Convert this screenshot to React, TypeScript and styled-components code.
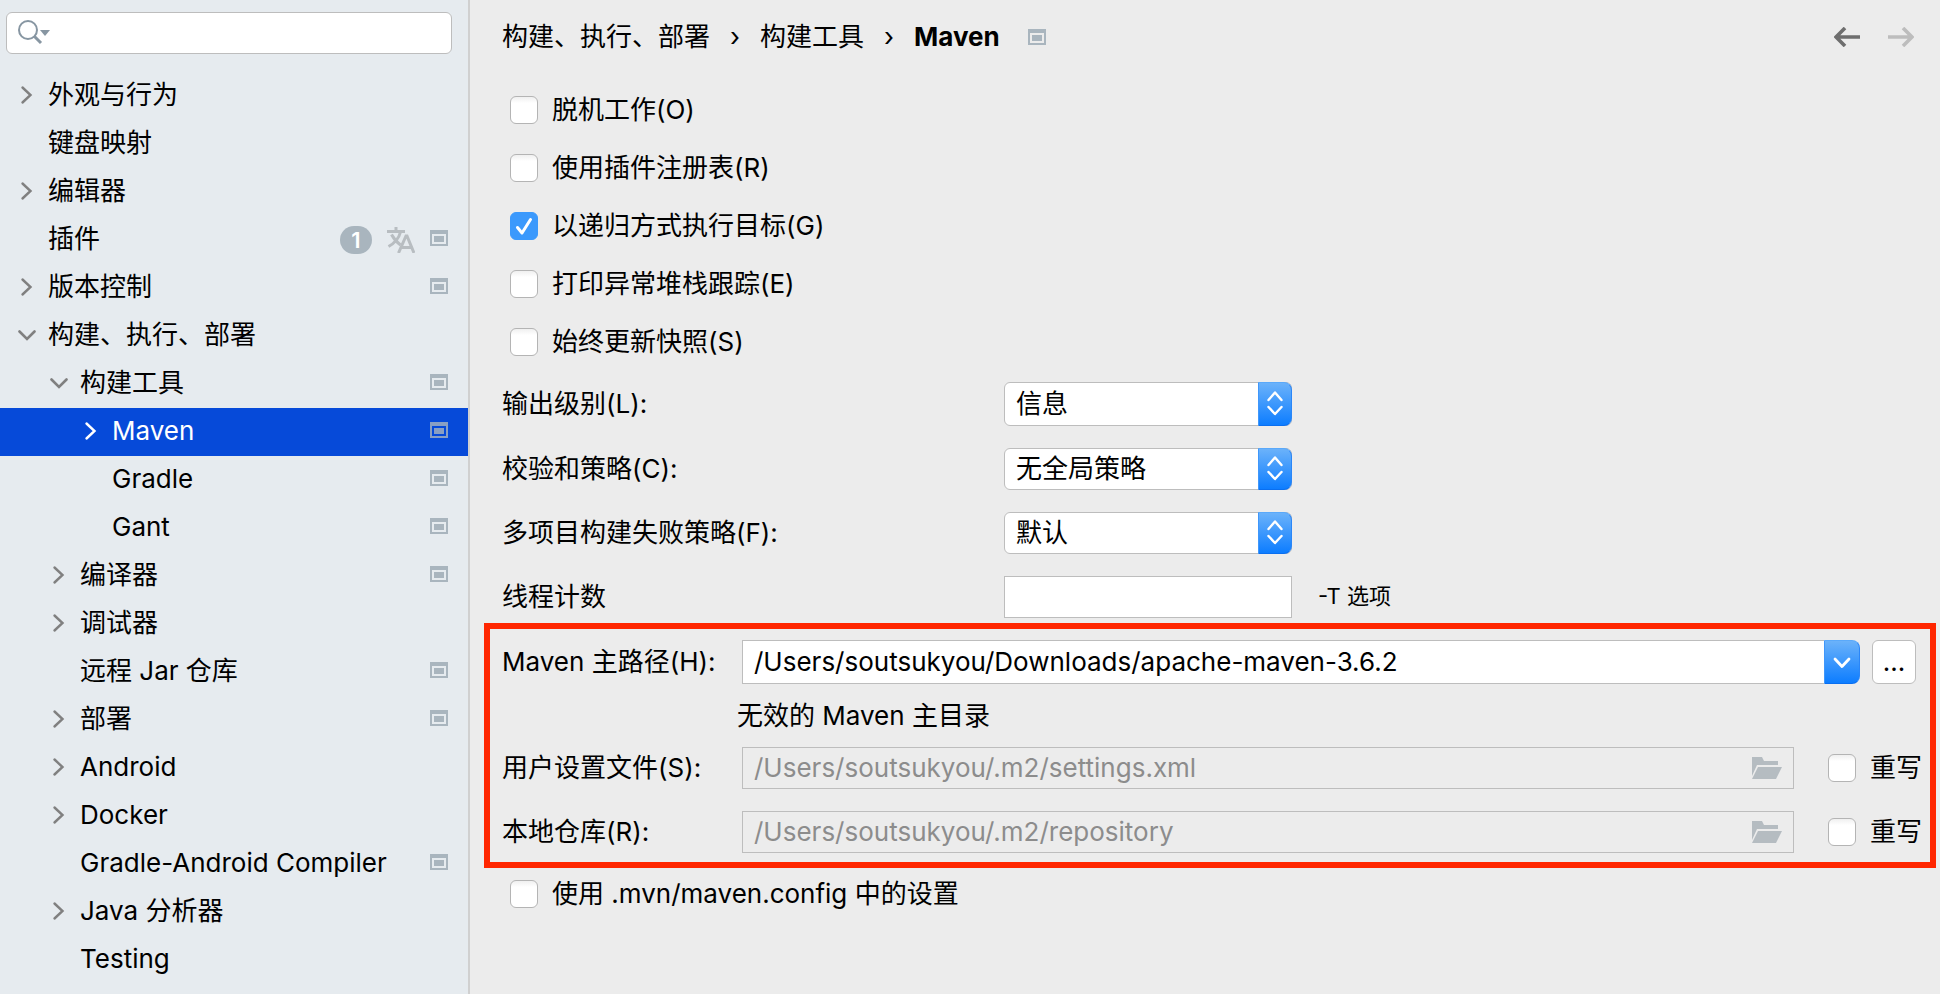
import React from "react";
import styled, { createGlobalStyle, css } from "styled-components";

const colors = {
  sidebar: "#e6ebef",
  panel: "#ececec",
  divider: "#d0d0d0",
  border: "#bdbdbd",
  selection: "#064ad9",
  icon: "#a9b5be",
  highlight: "#ff2600",
};

const GlobalStyle = createGlobalStyle`
  *, *::before, *::after { box-sizing: border-box; }
  body {
    margin: 0;
    background: ${colors.panel};
    color: #000;
    font: 26px/32px Inter, "Noto Sans CJK SC", sans-serif;
  }
  button, input, select { font: inherit; color: inherit; }
`;

const Page = styled.div`
  display: flex;
  min-height: 100vh;
`;

/* ---------- sidebar ---------- */

const Sidebar = styled.aside`
  flex: 0 0 470px;
  min-width: 0;
  border-right: 2px solid ${colors.divider};
  background: ${colors.sidebar};
`;

const SearchBox = styled.label`
  display: flex;
  align-items: center;
  height: 42px;
  margin: 12px 16px 18px 6px;
  padding: 0 10px;
  border: 1px solid ${colors.border};
  border-radius: 6px;
  background: #fff;
`;

const SearchInput = styled.input`
  flex: 1;
  width: 100%;
  min-width: 0;
  border: 0;
  outline: 0;
  background: transparent;
`;

const Tree = styled.ul`
  margin: 0;
  padding: 0;
  list-style: none;
`;

const TreeRow = styled.button<{ $level: number; $selected?: boolean }>`
  display: flex;
  align-items: center;
  width: 100%;
  height: 48px;
  padding: 0 20px 2px ${(p) => 16 + p.$level * 32}px;
  border: 0;
  background: ${(p) => (p.$selected ? colors.selection : "transparent")};
  color: ${(p) => (p.$selected ? "#fff" : "#000")};
  text-align: left;
  white-space: nowrap;
`;

const Toggle = styled.span<{ $selected?: boolean }>`
  display: flex;
  flex: 0 0 32px;
  color: ${(p) => (p.$selected ? "#fff" : "#808080")};
`;

const RowName = styled.span`
  flex: 1;
`;

const RowMarks = styled.span<{ $selected?: boolean }>`
  display: flex;
  align-items: center;
  gap: 15px;
  padding-top: 1px;
  color: #b8bdc1;
  opacity: ${(p) => (p.$selected ? 0.8 : 1)};
  & > svg:last-child { margin-bottom: 4px; }
`;

const Badge = styled.span`
  width: 32px;
  border-radius: 14px;
  background: ${colors.icon};
  color: #fff;
  font-size: 22px;
  font-weight: 600;
  line-height: 28px;
  text-align: center;
`;

const ScopeSvg = styled.svg`
  display: block;
  color: ${colors.icon};
`;

/* ---------- settings panel ---------- */

const Panel = styled.main`
  flex: 1;
  min-width: 0;
  padding: 0 4px 0 14px;
`;

const Header = styled.header`
  display: flex;
  align-items: center;
  justify-content: space-between;
  height: 74px;
  padding: 0 22px 0 18px;
`;

const Breadcrumb = styled.nav`
  display: flex;
  align-items: center;
  gap: 20px;
`;

const Crumb = styled.a`
  color: inherit;
  text-decoration: none;
`;

const Current = styled.strong`
  margin-right: 8px;
  font-weight: 700;
`;

const History = styled.div`
  display: flex;
  gap: 28px;
`;

const HistoryButton = styled.button`
  display: flex;
  padding: 0;
  border: 0;
  background: none;
  color: #6e6e6e;
  &:disabled { color: #bdbdbd; }
`;

const Options = styled.div`
  padding: 7px 26px 0;
`;

const CheckLabel = styled.label<{ $height: number }>`
  display: flex;
  align-items: center;
  gap: 14px;
  height: ${(p) => p.$height}px;
  white-space: nowrap;
`;

const CheckFrame = styled.span`
  display: grid;
  flex: none;
  & > * { grid-area: 1 / 1; }
`;

const CheckInput = styled.input`
  width: 28px;
  height: 28px;
  margin: 0;
  border: 1px solid #b4b4b4;
  border-radius: 6px;
  background: linear-gradient(#f0f0f0, #fff 6px);
  appearance: none;
  &:checked {
    border-color: #3b99fc;
    background: #3b99fc;
  }
  & + svg { visibility: hidden; pointer-events: none; }
  &:checked + svg { visibility: visible; }
`;

const FormGrid = styled.div`
  display: grid;
  grid-template-columns: 502px 288px 1fr;
  row-gap: 22px;
  align-items: center;
  padding: 11px 18px 5px;
`;

const controlFrame = css`
  width: 100%;
  border: 1px solid ${colors.border};
  background: #fff;
  outline: 0;
`;

const TextField = styled.input`
  ${controlFrame}
  height: 42px;
  padding: 0 11px;
`;

const SelectFrame = styled.span<{ $height: number }>`
  display: grid;
  grid-template-columns: 1fr 34px;
  height: ${(p) => p.$height}px;
`;

const SelectInput = styled.select`
  ${controlFrame}
  grid-area: 1 / 1 / 2 / 3;
  padding: 0 44px 0 11px;
  border-radius: 6px;
  appearance: none;
`;

const blueCap = css`
  display: flex;
  align-items: center;
  justify-content: center;
  border: 1px solid;
  border-color: #5aa9fa #2a86f8 #0a6ff0 #3f97fb;
  border-radius: 0 8px 8px 0;
  background: linear-gradient(#6bb2fa, #0d7dff);
  color: #fff;
`;

const SelectCap = styled.span`
  ${blueCap}
  grid-area: 1 / 2;
  pointer-events: none;
`;

const Hint = styled.span`
  padding: 0 0 2px 26px;
  font-size: 22px;
`;

const Highlighted = styled.section`
  display: grid;
  grid-template-columns: 240px 1fr;
  padding: 11px 8px 9px 12px;
  border: 6px solid ${colors.highlight};
`;

const FieldLabel = styled.label`
  align-self: center;
  white-space: nowrap;
`;

const PathRow = styled.div`
  display: flex;
  height: 44px;
  padding-right: 6px;
`;

const PathInput = styled.input`
  ${controlFrame}
  flex: 1;
  min-width: 0;
  padding: 0 11px;
  border-right: 0;
`;

const DropButton = styled.button`
  ${blueCap}
  width: 36px;
  padding: 0;
`;

const BrowseButton = styled.button`
  width: 44px;
  margin-left: 12px;
  padding: 0;
  border: 1px solid ${colors.border};
  border-radius: 6px;
  background: #fff;
`;

const Message = styled.p`
  grid-column: 2;
  margin: 0;
  padding: 16px 0 15px;
  text-indent: -5px;
`;

const OverrideRow = styled.div`
  display: flex;
  align-items: center;
  gap: 34px;
`;

const LockedField = styled.span`
  display: flex;
  flex: 1;
  align-items: center;
  height: 42px;
  padding: 0 11px;
  border: 1px solid ${colors.border};
  color: #b5bcc1;
`;

const LockedInput = styled.input`
  flex: 1;
  min-width: 0;
  padding: 0;
  border: 0;
  background: transparent;
  color: #8c8c8c;
`;

const OverrideCheck = styled.div`
  flex: 0 0 94px;
`;

const Spacer = styled.div`
  grid-column: 1 / 3;
  height: 22px;
`;

const ConfigOption = styled.div`
  padding: 2px 26px;
`;

/* ---------- icons ---------- */

const ScopeIcon = () => (
  <ScopeSvg width="18" height="16" viewBox="0 0 18 16" aria-hidden="true">
    <path fill="currentColor" fillRule="evenodd" d="M0 0h18v16H0zM2 4v10h14V4z" />
    <path fill="currentColor" d="M4 6h10v6H4z" />
  </ScopeSvg>
);

const ChevronRight = () => (
  <svg width="20" height="20" viewBox="0 0 20 20" fill="none" stroke="currentColor" strokeWidth="2.4" strokeLinecap="round" aria-hidden="true">
    <path d="M6.5 2.5 14.5 10l-8 7.5" />
  </svg>
);

const ChevronDown = () => (
  <svg width="20" height="20" viewBox="0 0 20 20" fill="none" stroke="currentColor" strokeWidth="2.6" strokeLinecap="round" aria-hidden="true">
    <path d="m3.5 6.5 7.5 7.5 7.5-7.5" />
  </svg>
);

const DropChevron = () => (
  <svg width="20" height="20" viewBox="0 0 20 20" fill="none" stroke="currentColor" strokeWidth="2.8" strokeLinecap="round" strokeLinejoin="round" aria-hidden="true">
    <path d="m3 7 7 7.500 7-7.500" />
  </svg>
);

const UpDown = () => (
  <svg width="18" height="28" viewBox="0 0 18 28" fill="none" stroke="currentColor" strokeWidth="2.4" strokeLinecap="round" strokeLinejoin="round" aria-hidden="true">
    <path d="M2.500 10 9 2.500l6.500 7.500M2.500 17 9 24l6.500-7" />
  </svg>
);

const CheckMark = () => (
  <svg width="28" height="28" viewBox="0 0 28 28" fill="none" stroke="#fff" strokeWidth="3" strokeLinecap="round" strokeLinejoin="round" aria-hidden="true">
    <path d="m7.500 15.500 4.500 5.500 8.500-13.500" />
  </svg>
);

const SearchIcon = () => (
  <svg width="34" height="26" viewBox="0 0 34 26" aria-hidden="true">
    <circle cx="11" cy="10" r="9" fill="none" stroke="#8796a2" strokeWidth="2" />
    <path d="m17 16 7 7" stroke="#8796a2" strokeWidth="3" />
    <path d="M23 10h10l-5 6z" fill="#8796a2" />
  </svg>
);

const TranslateIcon = () => (
  <svg width="28" height="26" viewBox="0 0 28 26" fill="none" stroke="currentColor" strokeWidth="3" aria-hidden="true">
    <path d="M0 4.500h18M9 0v4M13.500 5C12 11 7 16.500 1.500 19.500M4.500 7.500C7 12 10 15.500 13.500 18" />
    <path d="m11.500 26 7.500-17h1l7 17M14.500 20.500h10" />
  </svg>
);

const ArrowIcon = ({ forward }: { forward?: boolean }) => (
  <svg width="26" height="20" viewBox="0 0 26 20" fill="none" stroke="currentColor" strokeWidth="3.600" aria-hidden="true">
    <path d={forward ? "M0 10h24M15 1l9 9-9 9" : "M26 10H2M11 1l-9 9 9 9"} />
  </svg>
);

const FolderIcon = () => (
  <svg width="30" height="22" viewBox="0 0 30 22" fill="currentColor" aria-hidden="true">
    <path d="M0 0h10l2 4h14v4H5L0 19z" />
    <path d="M6 10h24l-6 12H0z" />
  </svg>
);

/* ---------- parts ---------- */

type Node = {
  name: string;
  level: number;
  state?: "open" | "closed";
  scope?: boolean;
  selected?: boolean;
  updates?: number;
};

const nodes: Node[] = [
  { name: "外观与行为", level: 0, state: "closed" },
  { name: "键盘映射", level: 0 },
  { name: "编辑器", level: 0, state: "closed" },
  { name: "插件", level: 0, scope: true, updates: 1 },
  { name: "版本控制", level: 0, state: "closed", scope: true },
  { name: "构建、执行、部署", level: 0, state: "open" },
  { name: "构建工具", level: 1, state: "open", scope: true },
  { name: "Maven", level: 2, state: "closed", scope: true, selected: true },
  { name: "Gradle", level: 2, scope: true },
  { name: "Gant", level: 2, scope: true },
  { name: "编译器", level: 1, state: "closed", scope: true },
  { name: "调试器", level: 1, state: "closed" },
  { name: "远程 Jar 仓库", level: 1, scope: true },
  { name: "部署", level: 1, state: "closed", scope: true },
  { name: "Android", level: 1, state: "closed" },
  { name: "Docker", level: 1, state: "closed" },
  { name: "Gradle-Android Compiler", level: 1, scope: true },
  { name: "Java 分析器", level: 1, state: "closed" },
  { name: "Testing", level: 1 },
];

const options = [
  { text: "脱机工作(O)" },
  { text: "使用插件注册表(R)" },
  { text: "以递归方式执行目标(G)", checked: true },
  { text: "打印异常堆栈跟踪(E)" },
  { text: "始终更新快照(S)" },
];

const selects = [
  { id: "output-level", label: "输出级别(L):", value: "信息", height: 44 },
  { id: "checksum-policy", label: "校验和策略(C):", value: "无全局策略", height: 42 },
  { id: "fail-policy", label: "多项目构建失败策略(F):", value: "默认", height: 42 },
];

const Check = ({ text, checked, height = 58 }: { text: string; checked?: boolean; height?: number }) => (
  <CheckLabel $height={height}>
    <CheckFrame>
      <CheckInput type="checkbox" defaultChecked={checked} />
      <CheckMark />
    </CheckFrame>
    {text}
  </CheckLabel>
);

const Override = ({ id, label, path }: { id: string; label: string; path: string }) => (
  <>
    <FieldLabel htmlFor={id}>{label}</FieldLabel>
    <OverrideRow>
      <LockedField>
        <LockedInput id={id} type="text" defaultValue={path} disabled />
        <FolderIcon />
      </LockedField>
      <OverrideCheck>
        <Check text="重写" height={42} />
      </OverrideCheck>
    </OverrideRow>
  </>
);

export default function App() {
  return (
    <Page>
      <GlobalStyle />
      <Sidebar>
        <SearchBox>
          <SearchIcon />
          <SearchInput type="text" aria-label="搜索" />
        </SearchBox>
        <Tree>
          {nodes.map((n) => (
            <li key={n.name}>
              <TreeRow type="button" $level={n.level} $selected={n.selected}>
                <Toggle $selected={n.selected}>
                  {n.state === "closed" && <ChevronRight />}
                  {n.state === "open" && <ChevronDown />}
                </Toggle>
                <RowName>{n.name}</RowName>
                <RowMarks $selected={n.selected}>
                  {n.updates && <Badge>{n.updates}</Badge>}
                  {n.updates && <TranslateIcon />}
                  {n.scope && <ScopeIcon />}
                </RowMarks>
              </TreeRow>
            </li>
          ))}
        </Tree>
      </Sidebar>

      <Panel>
        <Header>
          <Breadcrumb>
            <Crumb href="#build">构建、执行、部署</Crumb>
            <span>›</span>
            <Crumb href="#tools">构建工具</Crumb>
            <span>›</span>
            <Current>Maven</Current>
            <ScopeIcon />
          </Breadcrumb>
          <History>
            <HistoryButton type="button" aria-label="后退">
              <ArrowIcon />
            </HistoryButton>
            <HistoryButton type="button" aria-label="前进" disabled>
              <ArrowIcon forward />
            </HistoryButton>
          </History>
        </Header>

        <Options>
          {options.map((o) => (
            <Check key={o.text} text={o.text} checked={o.checked} />
          ))}
        </Options>

        <FormGrid>
          {selects.map((s) => (
            <React.Fragment key={s.id}>
              <FieldLabel htmlFor={s.id}>{s.label}</FieldLabel>
              <SelectFrame $height={s.height}>
                <SelectInput id={s.id}>
                  <option>{s.value}</option>
                </SelectInput>
                <SelectCap>
                  <UpDown />
                </SelectCap>
              </SelectFrame>
              <span />
            </React.Fragment>
          ))}
          <FieldLabel htmlFor="threads">线程计数</FieldLabel>
          <TextField id="threads" type="text" />
          <Hint>-T 选项</Hint>
        </FormGrid>

        <Highlighted>
          <FieldLabel htmlFor="maven-home">Maven 主路径(H):</FieldLabel>
          <PathRow>
            <PathInput id="maven-home" type="text" defaultValue="/Users/soutsukyou/Downloads/apache-maven-3.6.2" />
            <DropButton type="button" aria-label="显示路径">
              <DropChevron />
            </DropButton>
            <BrowseButton type="button">...</BrowseButton>
          </PathRow>
          <Message>无效的 Maven 主目录</Message>
          <Override id="user-settings" label="用户设置文件(S):" path="/Users/soutsukyou/.m2/settings.xml" />
          <Spacer />
          <Override id="local-repo" label="本地仓库(R):" path="/Users/soutsukyou/.m2/repository" />
        </Highlighted>

        <ConfigOption>
          <Check text="使用 .mvn/maven.config 中的设置" height={48} />
        </ConfigOption>
      </Panel>
    </Page>
  );
}
